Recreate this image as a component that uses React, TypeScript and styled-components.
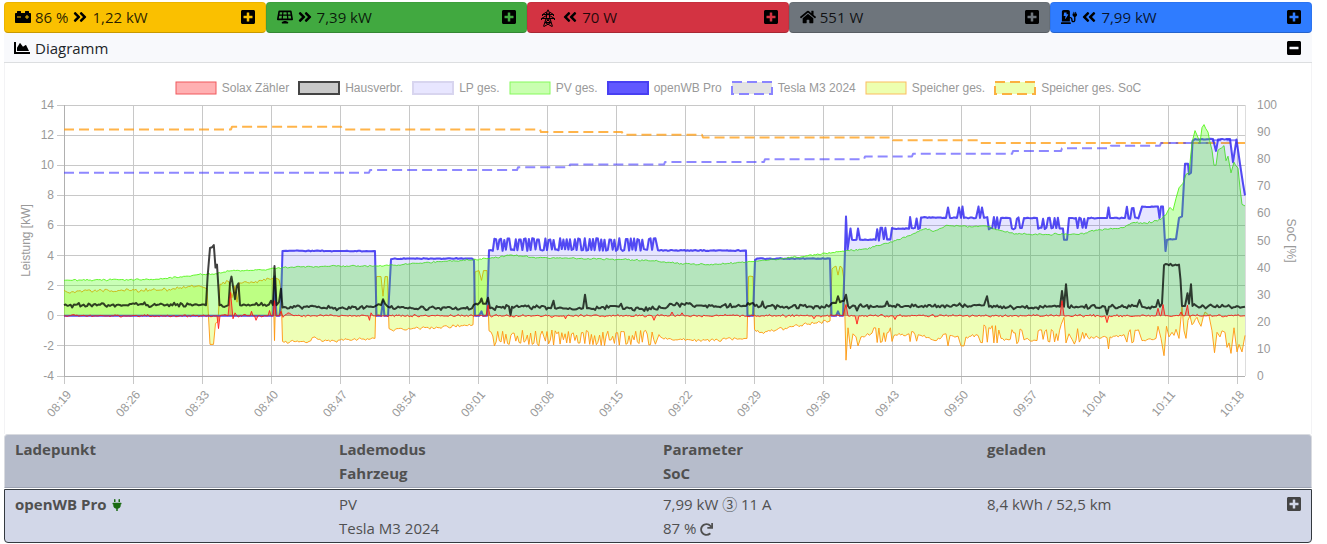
import React from "react";
import styled, { createGlobalStyle, css } from "styled-components";
import {
  FaAngleDoubleLeft,
  FaAngleDoubleRight,
  FaCarBattery,
  FaChargingStation,
  FaChartArea,
  FaHome,
  FaMinusSquare,
  FaPlug,
  FaPlusSquare,
  FaRedo,
  FaSolarPanel,
} from "react-icons/fa";

const GlobalStyle = createGlobalStyle`
  *, *::before, *::after { box-sizing: border-box; }
  body {
    margin: 0;
    background: #fff;
    color: #000;
    font-family: "Open Sans", "Noto Sans", "Noto Sans CJK JP", sans-serif;
    font-size: 15px;
    font-weight: 400;
    line-height: 24px;
  }
`;

const Page = styled.main`
  padding: 2px 15px 1px 4px;
`;

const Tiles = styled.div`
  display: grid;
  grid-template-columns: repeat(5, minmax(0, 1fr));
`;

const Tile = styled.section<{ $color: string }>`
  display: flex;
  align-items: center;
  justify-content: space-between;
  height: 31px;
  padding: 0 10px 2px;
  border: 1px solid rgba(0, 0, 0, 0.06);
  border-bottom: 1px solid rgba(0, 0, 0, 0.2);
  border-radius: 4px;
  background: ${(p) => p.$color};
  color: rgba(0, 0, 0, 0.85);
`;

const Reading = styled.span`
  display: flex;
  align-items: center;
  gap: 4px;
  white-space: nowrap;

  svg {
    flex: none;
    height: 16px;
    width: auto;
    color: #000;
  }
`;

const PylonIcon = styled.svg`
  && {
    height: 18px;
    margin-top: 2px;
  }
`;

const IconButton = styled.button<{ $tone?: string }>`
  display: flex;
  padding: 0;
  border: 0;
  background: none;
  color: ${(p) => p.$tone ?? "#000"};
  font-size: 16px;
  cursor: pointer;

  svg {
    width: 14px;
    height: 16px;
  }
`;

const CardHeader = styled.header`
  display: flex;
  align-items: center;
  justify-content: space-between;
  height: 30px;
  padding: 0 11px 0 10px;
  border-bottom: 1px solid #dcdee0;
  background: #f8f9fc;
`;

const CardTitle = styled.h1`
  display: flex;
  align-items: center;
  gap: 5px;
  margin: 0;
  color: #212529;
  font-size: 15px;
  font-weight: 400;

  svg {
    color: #000;
  }
`;

const ChartCard = styled.section`
  padding-top: 18px;
  border: solid #f3f3f5;
  border-width: 0 1px;
`;

const Legend = styled.ul`
  display: flex;
  justify-content: center;
  gap: 9px;
  margin: 0 0 1px;
  padding: 0;
  list-style: none;
  color: #999;
  font: 12px/14px "Liberation Sans", Arial, sans-serif;
`;

const LegendItem = styled.li`
  display: flex;
  align-items: center;
  gap: 5px;
  white-space: nowrap;
`;

const Swatch = styled.svg`
  width: 42px;
  height: 14px;
`;

const Plot = styled.svg`
  display: block;
  width: 100%;
  height: auto;
  font: 12px "Liberation Sans", Arial, sans-serif;
`;

const Table = styled.table`
  display: block;
  color: #505050;
`;

const rowLayout = css`
  display: grid;
  grid-template-columns: repeat(4, minmax(0, 1fr));
  padding: 2px 0 2px 10px;
`;

const HeadGroup = styled.thead`
  display: block;
  margin-bottom: 1px;
`;

const BodyGroup = styled.tbody`
  display: block;
`;

const HeadRow = styled.tr`
  ${rowLayout}
  border: 1px solid #d9dbe0;
  border-bottom-color: #9da3b3;
  border-radius: 4px 4px 0 0;
  background: #b6bccb;
`;

const BodyRow = styled.tr`
  ${rowLayout}
  border: 1px solid #343a40;
  border-radius: 0 0 4px 4px;
  background: #d2d7e8;
`;

const HeadCell = styled.th`
  padding: 0;
  text-align: left;
  font-weight: 700;
`;

const NameCell = styled.th`
  padding: 0;
  text-align: left;
  font-weight: 700;

  svg {
    margin-left: 4px;
    vertical-align: -1px;
    color: #1a6b12;
    font-size: 12px;
  }
`;

const Cell = styled.td`
  padding: 0;

  svg {
    vertical-align: -2px;
  }
`;

const LastCell = styled(Cell)`
  display: flex;
  align-items: flex-start;
  justify-content: space-between;
  padding-right: 10px;

  button {
    margin-top: 4px;
  }
`;

/* ---------- chart data ---------- */

const PLOT = { left: 59, right: 1240, top: 9, bottom: 280 };
const SAMPLE = 69 / 42; // one reading every ten seconds
const X = (u: number) => PLOT.left + u;
const Y = (kw: number) => PLOT.top + ((14 - kw) * (PLOT.bottom - PLOT.top)) / 18;
const YSoc = (soc: number) => PLOT.bottom - (soc * (PLOT.bottom - PLOT.top)) / 100;

// [position, value] is a corner of the curve; [from, to, low, high] is a stretch that switches to and fro
type Key = [number, number] | [number, number, number, number];

const hash = (n: number) => {
  const s = Math.sin(n * 127.1 + 11.7) * 43758.5453;
  return s - Math.floor(s);
};

// on/off state of the regulated charge current for every reading, never longer than three alike
const pulse: boolean[] = [];
for (let i = 0, run = 0; i < 720; i++) {
  let on = hash(i * 3) > 0.5;
  if (i && on === pulse[i - 1] && run >= (on ? 2 : 3)) on = !on;
  run = i && on === pulse[i - 1] ? run + 1 : 1;
  pulse.push(on);
}

function curve(keys: Key[], noise: number, seed: number, invert = false): [number, number][] {
  const corners: [number, number][] = [];
  keys.forEach((k) => {
    if (k.length === 2) {
      corners.push([k[0], k[1]]);
      return;
    }
    const [from, to, low, high] = k;
    for (let i = Math.ceil(from / SAMPLE); i * SAMPLE <= to; i++) {
      const up = pulse[i] !== invert;
      corners.push([i * SAMPLE, (up ? high : low) + (hash(i + seed) - 0.5) * noise * 3]);
    }
  });
  const out: [number, number][] = [];
  corners.forEach(([u, v], i) => {
    out.push([u, v]);
    const next = corners[i + 1];
    if (!next || next[0] - u < 4) return;
    const steps = Math.floor((next[0] - u) / SAMPLE);
    for (let s = 1; s < steps; s++) {
      const p = u + s * SAMPLE;
      const base = v + ((next[1] - v) * s) / steps;
      out.push([p, base + (hash(p + seed) + hash(p * 2 + seed) - 1) * noise]);
    }
  });
  return out;
}

const line = (pts: [number, number][]) =>
  pts.map(([u, v], i) => `${i ? "L" : "M"}${X(u).toFixed(1)} ${Y(v).toFixed(1)}`).join("");
const area = (pts: [number, number][]) => `${line(pts)}L${X(1181)} ${Y(0)}L${X(0)} ${Y(0)}Z`;

const pv = curve(
  [
    [0, 2.35], [95, 2.42], [135, 2.75], [150, 2.75], [165, 2.97], [200, 3.05], [220, 3.22], [276, 3.3], [313, 3.3],
    [340, 3.42], [383, 3.62], [425, 3.8], [448, 4.03], [470, 3.88], [555, 3.75], [589, 3.65], [617, 3.47], [644, 3.4],
    [689, 3.6], [719, 3.8], [769, 4.2], [802, 4.45], [835, 5.05], [862, 5.8], [869, 5.6], [884, 6], [909, 5.9],
    [922, 5.97], [932, 5.72], [952, 5.45], [985, 5.4], [1002, 5.45], [1015, 5.4], [1032, 5.7], [1059, 5.85],
    [1070, 6.2], [1082, 6.15], [1097, 6.4], [1102, 6.7], [1106, 7.2], [1109, 7], [1112, 7.8], [1115, 8.5], [1119, 8.8],
    [1122, 9.4], [1125, 9.5], [1128, 11.5], [1131, 12.3], [1133, 12], [1136, 11.5], [1138, 12.5], [1140, 12.7],
    [1144, 12.2], [1148, 11], [1150, 10], [1152, 10], [1154, 11], [1156, 11.1], [1160, 11.3], [1162, 10.3],
    [1164, 10.6], [1167, 9.5], [1170, 10.2], [1174, 9.8], [1176, 8.5], [1178, 7.4], [1181, 7.3],
  ],
  0.07,
  3,
);

const chargePoint = curve(
  [
    [0, 0], [209, 0], [210.5, 2.6], [212.5, 0], [215.5, 0], [217, 1], [218.5, 4.3], [222, 4.32], [310, 4.3],
    [311, 4.3], [312.5, 0], [317, 0], [319, 1], [320.5, 0], [324, 0], [327, 3.75], [330, 3.8], [408, 3.8], [410, 3.7],
    [411, 0], [415, 0], [417.5, 0.3], [419, 0], [423, 0], [425, 4.35], [426, 592, 4.37, 5.1], [594, 4.35],
    [681, 4.33], [682, 4.33], [683.5, 0], [689, 0], [691, 3.7], [693, 3.8], [766, 3.8], [767.5, 0], [772, 0],
    [774, 0.3], [776, 0], [779, 0], [782, 6.6], [783.5, 4.4], [786.5, 5.8], [788, 5.05], [792.5, 5.05], [794, 5.8],
    [796, 5.05], [808, 5.05], [809, 828, 5.05, 5.8], [829, 5.8], [845, 5.78], [846, 856, 5.8, 6.5], [857, 6.53],
    [882, 6.5], [884, 7.2], [886, 6.5], [893, 6.5], [895, 7.2], [897, 6.5], [898.5, 7.25], [900, 6.5], [912, 6.5],
    [914.5, 7.25], [916, 6.5], [918, 7.2], [920, 6.5], [923, 936, 5.8, 6.5], [937, 6.5], [945, 6.5],
    [946, 959, 5.8, 6.5], [960, 6.5], [973, 6.5], [974, 997, 5.8, 6.5], [999, 5.8], [1000, 5.05], [1003, 5.05],
    [1005, 6.5], [1008, 6.5], [1009, 1023, 5.8, 6.5], [1024, 6.5], [1043, 6.5], [1044.5, 7.2], [1046, 6.5],
    [1061, 6.5], [1062, 1076, 6.5, 7.2], [1078, 7.25], [1094, 7.25], [1095.5, 6.5], [1097, 7.25], [1099, 7.25],
    [1101.5, 4.3], [1103, 5.05], [1112, 5.1], [1115, 6.5], [1118, 6.6], [1121, 10.1], [1124, 10.1], [1125, 9.4],
    [1127, 9.5], [1128.5, 11.6], [1131, 11.75], [1133, 11.7], [1149, 11.75], [1152, 10.95], [1154, 11.7],
    [1166, 11.75], [1169, 10.2], [1172.5, 11.7], [1181, 8],
  ],
  0.04,
  7,
).map(([u, v]): [number, number] => [u, Math.abs(v) < 0.05 ? 0 : v]);

const battery = curve(
  [
    [0, 1.7], [6, 1.5], [13, 1.65], [95, 1.7], [135, 2], [143, 1.8], [146, -1.9], [149.5, -1.9], [151.5, -0.5],
    [154, -0.4], [156, 2.1], [165, 2.25], [168, 1.2], [171, 2], [173, 0.9], [175.5, 2.2], [190, 2.2], [205, 2.45],
    [209, 2.5], [210.5, -1.65], [212, 2.5], [215, 2.4], [217, 1.8], [218.5, -1.7], [245, -1.7], [251, -1.4],
    [258, -1.7], [300, -1.55], [311, -1.5], [312.5, 2.6], [317, 2.6], [319, 1.3], [321, 2.6], [323.5, 2.6],
    [325, -0.85], [328, -0.95], [409, -0.6], [411, 2.9], [415, 3], [417.5, 2.35], [419.5, 3], [423, 3], [425, -1],
    [426, 592, -1.8, -1.15], [595, -1.25], [600, -1.55], [629, -1.65], [683, -1.5], [684.5, 2.6], [689, 2.6],
    [690.5, -0.9], [698, -1.1], [730, -0.7], [766, -0.35], [768, 3.1], [772, 3.3], [774, 2.7], [776, 3.3],
    [778, 3.2], [780, 2.4], [782, -2.95], [784, -0.8], [786.5, -2.2], [789, -1.2], [792, -1.4], [794, -2],
    [797, -1.4], [808, -1.15], [809, 828, -1.85, -0.95], [830, -1.3], [845, -1.2], [846, 856, -1.8, -1.1],
    [857, -1.3], [871, -1.65], [882, -1.2], [884, -2], [886, -1.3], [894, -1.35], [897, -2], [900, -2], [902, -1.4],
    [914, -1.3], [916, 936, -1.9, -0.8], [937, -1.5], [945, -1.6], [946, 959, -1.7, -1], [960, -1.6], [973, -1.65],
    [974, 997, -1.75, -1], [1000, -0.1], [1002, -1.8], [1005, -1.2], [1009, 1023, -1.7, -1], [1024, -1.45],
    [1043, -1.45], [1044.5, -2.2], [1046, -1.4], [1060, -1.25], [1062, 1076, -1.8, -1], [1078, -1.65],
    [1092, -1.5], [1094, -0.7], [1097, -1.5], [1100, -2.65], [1102.5, -0.7], [1105, -1.4], [1108, -1.1],
    [1110, -1.3], [1112, -0.9], [1115, -1.5], [1118, 0.6], [1120, -1], [1122, -1.5], [1124, -0.3], [1126, 0],
    [1128, -0.6], [1133, -0.1], [1137, -0.7], [1139.5, 0], [1141, 0.25], [1145, 0], [1148, -1], [1150.5, -2.45],
    [1153, -1.1], [1156, -1.4], [1158, -1], [1161, -1.1], [1163, -2.1], [1165, -1.8], [1167, -2.5], [1170, -0.8],
    [1173, -2.4], [1175, -1.9], [1178, -2.4], [1181, -1.3],
  ],
  0.14,
  13,
  true,
);

const house = curve(
  [
    [0, 0.7], [140, 0.75], [142, 0.7], [146, 4.5], [148, 4.55], [149.8, 4.7], [151.5, 3.2], [153, 3.4], [155.5, 0.7],
    [164.5, 0.7], [166, 2.2], [167.5, 2.6], [171, 1.1], [173, 2], [174.5, 2.15], [176, 0.7], [205, 0.75],
    [207, 1], [209, 0.7], [210.5, 3.3], [212.5, 0.7], [215, 0.9], [217, 1.8], [218.5, 0.55], [230, 0.65], [275, 0.5],
    [305, 0.6], [313, 0.7], [317, 0.7], [319, 1.1], [321, 0.8], [326, 0.55], [408, 0.5], [412, 0.8], [416, 0.9],
    [417.5, 1.15], [419, 0.8], [422, 0.8], [424, 1.2], [426, 0.5], [445, 0.6], [446.5, 0.05], [448, 0.6], [487, 0.5],
    [489.5, 1], [491, 0.5], [519, 0.5], [521, 1.4], [523, 0.5], [555, 0.6], [557, 0.8], [559, 0.45], [600, 0.5],
    [606, 0.8], [640, 0.65], [682, 0.65], [684, 0.85], [689, 0.85], [691, 0.65], [697, 0.65], [698.5, 0.95],
    [700, 0.6], [765, 0.6], [768, 0.85], [772, 0.85], [774, 1.3], [776, 0.9], [780, 1], [782, 1.4], [784, 0.65],
    [791, 0.65], [793, 0.35], [795, 0.65], [821, 0.65], [823, 0.95], [825, 0.65], [920, 0.7], [923, 1.3], [925, 0.6],
    [996, 0.6], [998, 1.65], [1000, 0.6], [1002, 2.1], [1004, 0.6], [1041, 0.6], [1043, 0.1], [1045, 0.6],
    [1073, 0.6], [1075.5, 1.05], [1078, 0.6], [1092, 0.6], [1094, 1.05], [1096, 0.6], [1098, 0.8], [1100, 3.35],
    [1115, 3.4], [1116.5, 2.4], [1118, 0.65], [1121, 0.65], [1123.5, 1.5], [1125, 0.8], [1127, 2.1], [1128.5, 0.65],
    [1181, 0.6],
  ],
  0.17,
  19,
);

const meter = curve(
  [
    [0, 0], [153, 0], [154.5, -0.85], [156, 0], [164, 0], [166.5, 1.55], [169, -0.2], [171, 0.2], [173, 0],
    [186, 0], [187.5, 0.3], [189, 0], [190.5, 0], [192, -0.3], [194, 0], [204, 0], [205.5, 0.35], [207, 0],
    [209, 0], [210.5, 1], [212, 0], [215, 0], [217, 0.3], [219, -0.1], [224, 0.2], [230, 0], [304, 0], [305.5, -0.3],
    [307, 0.2], [309, 0], [422, 0], [424, 0.7], [426, 0], [500, 0], [501.5, -0.2], [503, 0], [588, 0], [590, -0.3],
    [592, 0], [606, 0], [608, 0.25], [610, 0], [616, 0], [618, 0.2], [620, 0], [748, 0], [750, -0.2], [752, 0],
    [779, 0], [782, 0.75], [784, 0], [791, 0], [793, -0.55], [795, 0], [829, 0], [831, -0.25], [833, 0], [996, 0],
    [998, 1], [1000, 0], [1041, 0], [1043, -0.45], [1045, 0], [1092, 0], [1094, 0.5], [1096, 0], [1097, 0],
    [1099, 0.75], [1101, 0], [1115, 0], [1117, 0.25], [1119, 0], [1121, 0], [1123.5, 0.7], [1125, 0], [1181, 0],
  ],
  0.1,
  29,
);

// state of charge: [start, percent]
const carSoc: [number, number][] = [
  [0, 75], [305, 76], [453, 77], [505, 78], [600, 79], [700, 80], [800, 81], [848, 82], [948, 83], [997, 84],
  [1046, 85], [1096, 86], [1148, 87],
];
const batterySoc: [number, number][] = [
  [0, 91], [167, 92], [277, 91], [476, 90], [558, 89], [638, 88], [828, 87], [915, 86],
];
const socLine = (steps: [number, number][], end: number) =>
  steps
    .map(([u, soc], i) => {
      const next = steps[i + 1]?.[0] ?? end;
      return `${i ? "L" : "M"}${X(u + (i ? 1 : 0))} ${YSoc(soc)}L${X(next)} ${YSoc(soc)}`;
    })
    .join("");

const times = [
  "08:19", "08:26", "08:33", "08:40", "08:47", "08:54", "09:01", "09:08", "09:15",
  "09:22", "09:29", "09:36", "09:43", "09:50", "09:57", "10:04", "10:11", "10:18",
];
const powerTicks = [14, 12, 10, 8, 6, 4, 2, 0, -2, -4];
const socTicks = [100, 90, 80, 70, 60, 50, 40, 30, 20, 10, 0];

const series = [
  { label: "Solax Zähler", fill: "#ffb0b2", stroke: "#f0585c", width: 1 },
  { label: "Hausverbr.", fill: "#c9c9c9", stroke: "#444", width: 2 },
  { label: "LP ges.", fill: "#e8e6ff", stroke: "#d8d5ef", width: 2 },
  { label: "PV ges.", fill: "#c9ffb0", stroke: "#86fa5c", width: 1 },
  { label: "openWB Pro", fill: "#6158ff", stroke: "#483ff2", width: 2 },
  { label: "Tesla M3 2024", fill: "#e3e3e3", stroke: "#8a84ff", width: 2, dash: "10 5" },
  { label: "Speicher ges.", fill: "#edffb0", stroke: "#fbbd60", width: 1 },
  { label: "Speicher ges. SoC", fill: "#edffb0", stroke: "#fbb040", width: 2, dash: "10 5" },
];

function PowerChart() {
  return (
    <Plot viewBox="0 0 1306 338" role="img" aria-label="Leistung und SoC im Zeitverlauf">
      <g stroke="#c8c8c8" fill="none" shapeRendering="crispEdges">
        {powerTicks.map((t) => (
          <line key={t} x1={PLOT.left - 7} x2={PLOT.right} y1={Y(t)} y2={Y(t)} />
        ))}
        {times.map((t, i) => (
          <line key={t} x1={X(i * 69)} x2={X(i * 69)} y1={PLOT.top} y2={PLOT.bottom + 8} />
        ))}
        <line x1={PLOT.right} x2={PLOT.right} y1={PLOT.top} y2={PLOT.bottom} stroke="#ddd" />
        <path d={`M${PLOT.left} ${PLOT.top}V${PLOT.bottom}H${PLOT.right}`} stroke="#b0b0b0" />
      </g>

      <g fill="none" strokeLinejoin="round">
        <path d={socLine(batterySoc, 1181)} stroke="rgba(255,155,13,0.75)" strokeWidth="2" strokeDasharray="10 5" />
        <path d={area(battery)} fill="rgba(200,255,13,0.3)" />
        <path d={line(battery)} stroke="rgba(255,150,13,0.9)" />
        <path d={socLine(carSoc, 1176)} stroke="rgba(66,56,255,0.6)" strokeWidth="2" strokeDasharray="10 5" />
        <path d={line(chargePoint)} stroke="rgba(55,45,245,0.82)" strokeWidth="2" />
        <path d={area(pv)} fill="rgba(76,255,13,0.3)" />
        <path d={line(pv)} stroke="rgba(76,245,13,0.85)" />
        <path d={area(chargePoint)} fill="rgba(10,0,255,0.1)" />
        <path d={line(chargePoint)} stroke="rgba(60,50,220,0.15)" strokeWidth="2" />
        <path d={line(house)} stroke="rgba(0,0,0,0.75)" strokeWidth="2" />
        <path d={area(meter)} fill="rgba(255,20,20,0.3)" />
        <path d={line(meter)} stroke="rgba(255,20,20,0.85)" />
      </g>

      <g fill="#999">
        {powerTicks.map((t) => (
          <text key={t} x={PLOT.left - 10} y={Y(t) + 4} textAnchor="end">
            {t}
          </text>
        ))}
        {socTicks.map((t) => (
          <text key={t} x={PLOT.right + 12} y={YSoc(t) + 4}>
            {t}
          </text>
        ))}
        {times.map((t, i) => (
          <text key={t} textAnchor="end" transform={`translate(${X(i * 69) + 8} ${PLOT.bottom + 19}) rotate(-49)`}>
            {t}
          </text>
        ))}
        <text textAnchor="middle" transform={`translate(25 ${Y(5)}) rotate(-90)`}>
          Leistung [kW]
        </text>
        <text textAnchor="middle" transform={`translate(1282 ${Y(5)}) rotate(90)`}>
          SoC [%]
        </text>
      </g>
    </Plot>
  );
}

function Pylon() {
  return (
    <PylonIcon viewBox="0 0 20 18" fill="none" stroke="#000" aria-hidden="true">
      <path d="M8.5 4 10 .8 11.5 4M8.5 4V8L5.5 17.5M11.5 4V8L14.5 17.5" />
      <path d="M8.5 3 4.5 5.5H15.5L11.5 3M4.5 5.5V7M15.5 5.5V7" />
      <path d="M8.5 6.5 3.5 9.5H16.5L11.5 6.5M3.5 9.5V11M16.5 9.5V11" />
      <path d="M8.5 4 11.5 6.5M11.5 4 8.5 6.5M8 9.5 13 13.5 6 17.5M12 9.5 7 13.5 14 17.5M7 13.5H13" />
    </PylonIcon>
  );
}

const tiles = [
  { name: "Speicher", color: "#fac000", icon: <FaCarBattery />, level: "86 %", out: true, value: "1,22 kW" },
  { name: "PV", color: "#41a940", icon: <FaSolarPanel />, out: true, value: "7,39 kW" },
  { name: "EVU", color: "#d33342", icon: <Pylon />, out: false, value: "70 W" },
  { name: "Hausverbrauch", color: "#6e757c", icon: <FaHome />, value: "551 W" },
  { name: "Ladepunkte", color: "#2f7cff", icon: <FaChargingStation />, out: false, value: "7,99 kW" },
];

export default function App() {
  return (
    <>
      <GlobalStyle />
      <Page>
        <Tiles>
          {tiles.map((t) => (
            <Tile key={t.name} $color={t.color}>
              <Reading>
                {t.icon}
                {t.level}
                {t.out !== undefined && (t.out ? <FaAngleDoubleRight /> : <FaAngleDoubleLeft />)}
                <span>{t.value}</span>
              </Reading>
              <IconButton type="button" aria-label={`${t.name} aufklappen`}>
                <FaPlusSquare />
              </IconButton>
            </Tile>
          ))}
        </Tiles>

        <CardHeader>
          <CardTitle>
            <FaChartArea size={16} />
            Diagramm
          </CardTitle>
          <IconButton type="button" aria-label="Diagramm zuklappen">
            <FaMinusSquare />
          </IconButton>
        </CardHeader>
        <ChartCard>
          <Legend>
            {series.map((s) => (
              <LegendItem key={s.label}>
                <Swatch viewBox="0 0 42 14" aria-hidden="true">
                  <rect
                    x="1"
                    y="1"
                    width="40"
                    height="12"
                    fill={s.fill}
                    stroke={s.stroke}
                    strokeWidth={s.width}
                    strokeDasharray={s.dash}
                  />
                </Swatch>
                {s.label}
              </LegendItem>
            ))}
          </Legend>
          <PowerChart />
        </ChartCard>

        <Table>
          <HeadGroup>
            <HeadRow>
              <HeadCell scope="col">Ladepunkt</HeadCell>
              <HeadCell scope="col">
                Lademodus
                <br />
                Fahrzeug
              </HeadCell>
              <HeadCell scope="col">
                Parameter
                <br />
                SoC
              </HeadCell>
              <HeadCell scope="col">geladen</HeadCell>
            </HeadRow>
          </HeadGroup>
          <BodyGroup>
            <BodyRow>
              <NameCell scope="row">
                openWB Pro
                <FaPlug />
              </NameCell>
              <Cell>
                PV
                <br />
                Tesla M3 2024
              </Cell>
              <Cell>
                7,99 kW ③ 11 A
                <br />
                87 % <FaRedo size={13} />
              </Cell>
              <LastCell>
                8,4 kWh / 52,5 km
                <IconButton type="button" $tone="#444" aria-label="Ladepunkt aufklappen">
                  <FaPlusSquare />
                </IconButton>
              </LastCell>
            </BodyRow>
          </BodyGroup>
        </Table>
      </Page>
    </>
  );
}
